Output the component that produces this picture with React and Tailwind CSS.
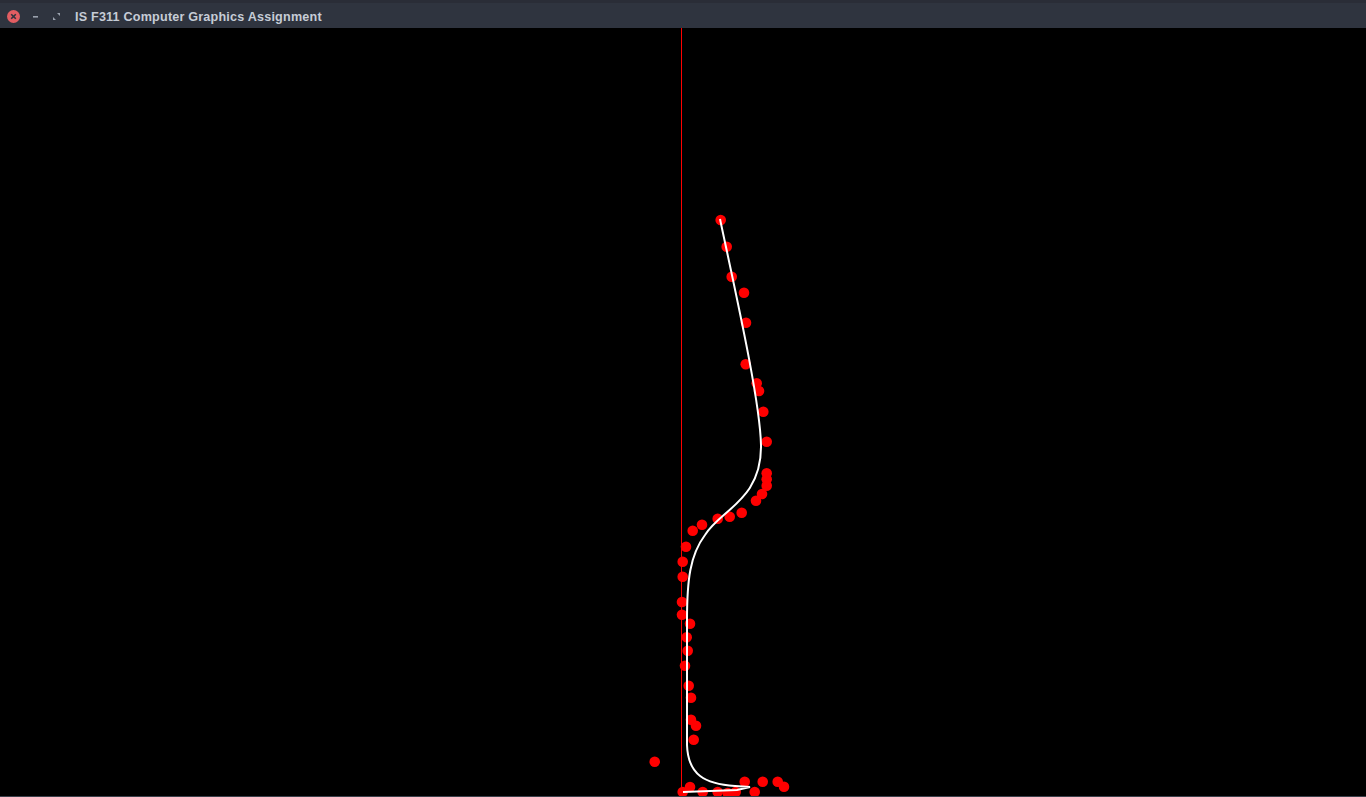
import React from "react";

// sample points picked on the canvas (page coords)
const points = [
  [720.7, 220], [726.7, 246.7], [731.7, 276.7], [744, 292.7], [746, 322.7],
  [745.7, 364.3], [756.7, 383.3], [759, 391], [763.3, 411.7], [766.7, 441.7],
  [766.7, 473.3], [766.7, 479.3], [766.7, 485.7], [762, 494], [756, 500.7],
  [741.7, 512.7], [729.7, 516.7], [717.7, 518.7], [702, 524.7], [692.7, 530.7],
  [686, 546.7], [682.7, 561.7], [682.7, 576.7], [682, 602], [682, 614.7],
  [690, 623.7], [686.7, 637.3], [687.7, 650.7], [685, 665.7], [688.7, 685.7],
  [691, 697.7], [691, 719.7], [696, 725.7], [693.7, 739.7], [654.7, 761.7],
  [744.7, 781.7], [762.7, 781.7], [777.7, 781.7], [784, 786.7], [754.7, 792],
  [690, 787], [682.7, 792], [702.7, 792], [717.7, 792], [727.7, 793], [735.7, 792],
];

const curve =
  "M720,219 C735,290 760,400 761,445 C762,500 720,510 705,535 C690,555 687,580 687,620 L687,745 C688,775 705,784 735,786 L750,787 L737,790 L683,792";

function TitleBar() {
  return (
    <div className="h-[28px] shrink-0 bg-[#2f343f] border-t-[3px] border-[#2a2d37] flex items-center pl-[7px] pr-[2px] pt-[1px]">
      <svg width="13" height="13" viewBox="0 0 13 13" className="shrink-0">
        <circle cx="6.5" cy="6.5" r="6.5" fill="#e25d62" />
        <path d="M4.2 4.2 L8.8 8.8 M8.8 4.2 L4.2 8.8" stroke="#2f343f" strokeWidth="1.6" />
      </svg>
      <svg width="9" height="9" viewBox="0 0 9 9" className="ml-[11px] shrink-0">
        <rect x="2" y="4" width="5" height="1.6" fill="#9aa1ad" />
      </svg>
      <svg width="9" height="9" viewBox="0 0 9 9" className="ml-[12px] shrink-0">
        <path d="M5 1 H8 V4 Z M1 5 V8 H4 Z" fill="#9aa1ad" />
      </svg>
      <span className="ml-[14px] pt-[2px] text-[12.6px] font-bold text-[#c6ccd6] font-['Liberation_Sans',sans-serif] leading-none tracking-[0.2px]">
        IS F311 Computer Graphics Assignment
      </span>
      <div className="flex-1" />
    </div>
  );
}

export default function App() {
  return (
    <div className="w-[1366px] h-[797px] flex flex-col bg-black overflow-hidden">
      <TitleBar />
      <div className="flex-1 bg-black">
        <svg width="1366" height="768" viewBox="0 28 1366 768" className="block">
          <line x1="681.5" y1="28" x2="681.5" y2="796" stroke="#ff0000" strokeWidth="1" />
          {points.map(([x, y], i) => (
            <circle key={i} cx={x} cy={y} r="5.3" fill="#ff0000" />
          ))}
          <path d={curve} fill="none" stroke="#ffffff" strokeWidth="2" />
        </svg>
      </div>
      <div className="h-px bg-[#3b404b] shrink-0" />
    </div>
  );
}
